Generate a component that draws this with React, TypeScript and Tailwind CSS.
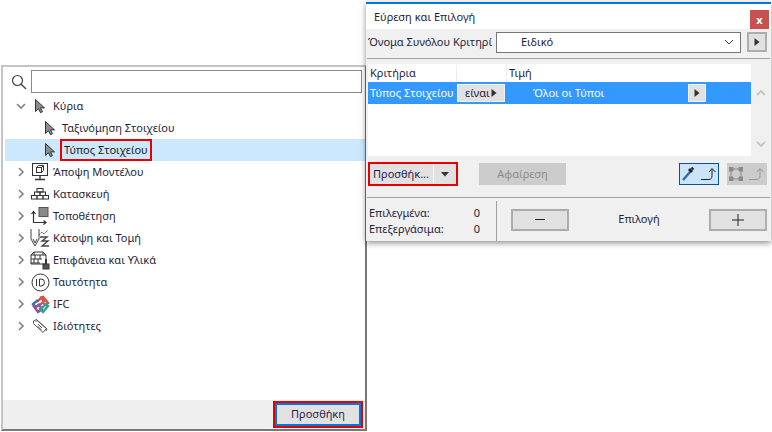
import type { ReactNode } from "react";

const font = "font-['Noto_Sans',sans-serif]";

function Chevron({ open }: { open?: boolean }) {
  return (
    <svg width="10" height="10" viewBox="0 0 10 10" className="shrink-0" fill="none" stroke="#808080" strokeWidth="1.6">
      {open ? <path d="M1 3l4 4 4-4" /> : <path d="M3 1l4 4-4 4" />}
    </svg>
  );
}

function Cursor() {
  return (
    <svg width="14" height="16" viewBox="0 0 14 16" className="shrink-0">
      <path d="M2.5 1.5v12l3-2.8 2 4 2-1-2-3.8h4z" fill="#8c8c8c" stroke="#333" strokeWidth="1" />
    </svg>
  );
}

function ViewIcon() {
  return (
    <svg width="18" height="18" viewBox="0 0 18 18" fill="none" stroke="#333" strokeWidth="1">
      <rect x="1.5" y="0.5" width="15" height="12" />
      <rect x="5.5" y="4.5" width="5" height="5" />
      <path d="M5.5 4.5l2-2h5v5l-2 2M10.5 4.5l2-2" />
      <path d="M9 13v3M4 16.5h10" strokeWidth="1.4" />
    </svg>
  );
}

function BricksIcon() {
  return (
    <svg width="18" height="14" viewBox="0 0 18 14" fill="none" stroke="#333" strokeWidth="1">
      <rect x="6" y="1.5" width="6" height="3.5" />
      <rect x="3.5" y="5" width="5.5" height="3.5" />
      <rect x="9" y="5" width="5.5" height="3.5" />
      <rect x="0.5" y="8.5" width="5.5" height="3.5" />
      <rect x="6" y="8.5" width="6" height="3.5" />
      <rect x="12" y="8.5" width="5.5" height="3.5" />
    </svg>
  );
}

function PlaceIcon() {
  return (
    <svg width="18" height="18" viewBox="0 0 18 18" fill="none">
      <rect x="8" y="0.5" width="9" height="9" fill="#8a8a8a" stroke="#555" />
      <path d="M2.5 5v10.5h12M0.5 7l2-2.5 2 2.5M12.5 13.5l2.5 2-2.5 2" stroke="#333" strokeWidth="1.2" />
    </svg>
  );
}

function SectionIcon() {
  return (
    <svg width="20" height="20" viewBox="0 0 20 20" fill="none" stroke="#444" strokeWidth="1">
      <path d="M1 1v10l4 7 4-7V1" />
      <path d="M3 11l2 4 2-4" />
      <path d="M9 7l3-3 2 2 4-4" strokeDasharray="2 1" />
      <path d="M10 9h7l-5 4h6l-6 5h7" strokeWidth="1.4" />
    </svg>
  );
}

function SurfaceIcon() {
  return (
    <svg width="20" height="20" viewBox="0 0 20 20" fill="none" stroke="#333" strokeWidth="1">
      <path d="M1 5l3-3h9l3 3v9H1zM1 5h15M1 9h11M1 13h9M5 5v4M10 5v4M4 9v4M8 9v4M4 2v3M13 2v3" />
      <rect x="13" y="14" width="6" height="5" fill="#555" />
      <path d="M16 14V9" strokeWidth="2" />
    </svg>
  );
}

function IdIcon() {
  return (
    <svg width="19" height="19" viewBox="0 0 19 19" fill="none" stroke="#333">
      <circle cx="9.5" cy="9.5" r="8.5" />
      <path d="M5.5 6v7M8.5 6v7h1.5a3.5 3.5 0 0 0 0-7z" />
    </svg>
  );
}

function IfcIcon() {
  return (
    <svg width="19" height="19" viewBox="0 0 19 19" fill="none" strokeWidth="2.4">
      <path d="M6 7l4-4 3 3-4 4" stroke="#d8504a" />
      <path d="M9 3l3-1 5 6-4 3" stroke="#d8504a" />
      <path d="M7 5L2 9l3 3 4-3" stroke="#3f6fb5" />
      <path d="M2 10l5 7 4-3-4-5" stroke="#a8479b" />
      <path d="M12 8l5 3-5 6-3-3 4-3" stroke="#2aa39a" />
    </svg>
  );
}

function TagIcon() {
  return (
    <svg width="17" height="17" viewBox="0 0 17 17" fill="none" stroke="#555">
      <path d="M1.5 3l3-1.5 10 9-3.5 4-9.5-9z" />
      <path d="M4 1.5l11 9.5-1 2M3.5 3.5h1M6 6l4 4M5.5 8l4 4" />
    </svg>
  );
}

function Tri({ down }: { down?: boolean }) {
  return (
    <svg width="8" height="8" viewBox="0 0 8 8" className="shrink-0">
      <path d={down ? "M0 2h8L4 6.5z" : "M1.5 0L6.5 4 1.5 8z"} fill="#333" />
    </svg>
  );
}

function TreeRow({ icon, label, open, indent, selected }: { icon: ReactNode; label: string; open?: boolean; indent?: boolean; selected?: boolean }) {
  return (
    <div className={`flex h-[22px] items-center ${selected ? "bg-[#cce8ff]" : ""}`}>
      <span className="flex w-[22px] shrink-0 justify-end pr-[1px]">{!indent && <Chevron open={open} />}</span>
      <span className={`flex w-[26px] shrink-0 justify-center ${indent ? "ml-[10px]" : ""}`}>{icon}</span>
      {selected ? (
        <span className="-ml-[3px] flex h-[22px] items-center border-[2px] border-[#e60000] px-[2px] text-[#1a1a1a]">{label}</span>
      ) : (
        <span className={indent ? "ml-[-1px]" : ""}>{label}</span>
      )}
    </div>
  );
}

const rows = [
  { label: "Άποψη Μοντέλου", icon: <ViewIcon /> },
  { label: "Κατασκευή", icon: <BricksIcon /> },
  { label: "Τοποθέτηση", icon: <PlaceIcon /> },
  { label: "Κάτοψη και Τομή", icon: <SectionIcon /> },
  { label: "Επιφάνεια και Υλικά", icon: <SurfaceIcon /> },
  { label: "Ταυτότητα", icon: <IdIcon /> },
  { label: "IFC", icon: <IfcIcon /> },
  { label: "Ιδιότητες", icon: <TagIcon /> },
];

function LeftWindow() {
  return (
    <div className="absolute left-[1px] top-[65px] flex h-[366px] w-[366px] flex-col border-[2px] border-[#c4c4c4] border-r-[#777] border-b-[#777] bg-white text-[#1e1e3c]">
      <div className="flex h-[26px] shrink-0 items-center pl-[8px] pr-[3px] pt-[3px]">
        <svg width="16" height="16" viewBox="0 0 16 16" fill="none" stroke="#444" strokeWidth="1.2" className="shrink-0">
          <circle cx="6.5" cy="6.5" r="5" />
          <path d="M10.2 10.2L15 15" strokeWidth="1.4" />
        </svg>
        <div className="ml-[4px] h-[23px] flex-1 border border-[#8a8a8a] bg-white" />
      </div>
      <div className="flex-1 pt-[2px] pl-[2px]">
        <TreeRow icon={<Cursor />} label="Κύρια" open />
        <TreeRow icon={<Cursor />} label="Ταξινόμηση Στοιχείου" indent />
        <TreeRow icon={<Cursor />} label="Τύπος Στοιχείου" indent selected />
        {rows.map((r) => (
          <TreeRow key={r.label} icon={r.icon} label={r.label} />
        ))}
      </div>
      <div className="flex h-[29px] shrink-0 items-center justify-end bg-[#efefef] pr-[2px]">
        <div className="border-[2px] border-[#e60000]">
          <button className="flex h-[23px] w-[86px] items-center justify-center border-[2px] border-[#0078d7] bg-[#e1e1e1] text-[#1e1e50]">Προσθήκη</button>
        </div>
      </div>
    </div>
  );
}

function GrayBtn({ children, className }: { children: ReactNode; className: string }) {
  return <button className={`flex items-center justify-center border-[2px] border-[#adadad] bg-[#e1e1e1] ${className}`}>{children}</button>;
}

function RightWindow() {
  return (
    <div className="absolute left-[366px] top-[2px] flex h-[239px] w-[405px] flex-col border-t-[2px] border-[#0078d7] bg-[#f0f0f0] text-[#1e1e3c] shadow-[0_2px_6px_rgba(0,0,0,0.45)]">
      <div className="flex h-[25px] shrink-0 items-start justify-between bg-white pl-[8px] pr-[2px]">
        <span className="mt-[5px]">Εύρεση και Επιλογή</span>
        <span className="mt-[6px] flex h-[19px] w-[19px] items-center justify-center bg-[#c75050] font-bold leading-none text-white">x</span>
      </div>
      <div className="flex h-[26px] shrink-0 items-center pl-[2px] pr-[4px]">
        <span className="w-[128px] shrink-0 whitespace-nowrap">Όνομα Συνόλου Κριτηρί</span>
        <div className="flex h-[21px] w-[245px] items-center justify-between border border-[#777] bg-white pl-[24px] pr-[6px]">
          <span>Ειδικό</span>
          <svg width="10" height="8" viewBox="0 0 10 8" fill="none" stroke="#444"><path d="M1 2l4 4 4-4" /></svg>
        </div>
        <GrayBtn className="ml-[6px] h-[20px] w-[20px]"><Tri /></GrayBtn>
      </div>
      <div className="mx-[1px] mt-[3px] h-[1px] shrink-0 bg-[#a0a0a0] pr-[3px]" />
      <div className="mt-[5px] flex h-[92px] shrink-0 pl-[2px] pr-[1px]">
        <div className="flex-1 bg-white">
          <div className="flex h-[18px] items-center">
            <span className="w-[89px] border-r border-[#ececec] pl-[2px]">Κριτήρια</span>
            <span className="h-[18px] w-[50px] border-r border-[#ececec]" />
            <span className="pl-[2px]">Τιμή</span>
          </div>
          <div className="flex h-[22px] items-center bg-[#3399ff] text-white">
            <span className="w-[89px] shrink-0 whitespace-nowrap pl-[2px]">Τύπος Στοιχείου</span>
            <div className="flex h-[18px] w-[48px] items-center justify-between border border-[#f0f0f0] bg-[#e1e1e1] px-[7px] text-[#1e1e3c]">
              <span>είναι</span>
              <Tri />
            </div>
            <span className="ml-[28px] w-[155px]">Όλοι οι Τύποι</span>
            <div className="flex h-[18px] w-[18px] items-center justify-center border border-[#f0f0f0] bg-[#e1e1e1]"><Tri /></div>
          </div>
        </div>
        <div className="flex w-[19px] shrink-0 flex-col items-center justify-between pb-[8px] pt-[25px]">
          <svg width="10" height="7" viewBox="0 0 10 7" fill="none" stroke="#c4c4c4" strokeWidth="1.8"><path d="M1 6l4-4 4 4" /></svg>
          <svg width="10" height="7" viewBox="0 0 10 7" fill="none" stroke="#c4c4c4" strokeWidth="1.8"><path d="M1 1l4 4 4-4" /></svg>
        </div>
      </div>
      <div className="mt-[6px] flex h-[24px] shrink-0 items-center pl-[2px] pr-[4px]">
        <div className="flex h-[24px] w-[90px] items-center border-[2px] border-[#e60000] bg-[#e1e1e1] pl-[3px] text-[#1e1e50]">
          <span className="w-[60px] whitespace-nowrap">Προσθήκ...</span>
          <span className="h-[18px] w-[1px] bg-[#f8f8f8]" />
          <span className="flex flex-1 justify-center"><Tri down /></span>
        </div>
        <div className="ml-[21px] flex h-[22px] w-[87px] items-center justify-center bg-[#cccccc] text-[#8c8c8c]">Αφαίρεση</div>
        <div className="ml-[113px] flex h-[22px] w-[40px] items-center justify-center gap-[6px] border-[1px] border-[#005499] bg-[#cce4f7]">
          <svg width="14" height="16" viewBox="0 0 14 16" fill="none">
            <path d="M2 14l7-8" stroke="#2b6cb0" strokeWidth="2.4" />
            <path d="M8 3l3 3" stroke="#222" strokeWidth="3" />
            <path d="M10.5 1.5l2 2" stroke="#222" strokeWidth="2" />
          </svg>
          <svg width="16" height="14" viewBox="0 0 16 14" fill="none" stroke="#222"><path d="M0 12.5h8c2 0 3-1.5 3-4V2M8 5l3-3.5L14.500 5" /></svg>
        </div>
        <div className="ml-[8px] flex h-[22px] w-[40px] items-center justify-center gap-[6px] bg-[#cccccc]">
          <svg width="14" height="14" viewBox="0 0 14 14" fill="none" stroke="#8a8a8a">
            <rect x="2" y="2" width="10" height="10" />
            <path d="M0 0h4v4H0zM10 0h4v4h-4zM0 10h4v4H0zM10 10h4v4h-4z" fill="#8a8a8a" />
          </svg>
          <svg width="16" height="14" viewBox="0 0 16 14" fill="none" stroke="#999"><path d="M0 12.500h8c2 0 3-1.500 3-4V2M8 5l3-3.500L14.500 5" /></svg>
        </div>
      </div>
      <div className="mx-[1px] mt-[11px] h-[1px] shrink-0 bg-[#a0a0a0]" />
      <div className="flex min-h-0 flex-1 items-stretch pl-[3px] pr-[4px]">
        <div className="w-[113px] shrink-0 pt-[7px] pr-[2px] leading-[16px]">
          <div className="flex justify-between"><span>Επιλεγμένα:</span><span>0</span></div>
          <div className="flex justify-between"><span>Επεξεργάσιμα:</span><span>0</span></div>
        </div>
        <div className="ml-[14px] mt-[3px] w-[1px] bg-[#a0a0a0]" />
        <div className="flex flex-1 items-center justify-between pl-[14px]">
          <GrayBtn className="h-[22px] w-[58px]">
            <span className="h-[1px] w-[10px] bg-[#222]" />
          </GrayBtn>
          <span>Επιλογή</span>
          <GrayBtn className="h-[22px] w-[58px]">
            <svg width="12" height="12" viewBox="0 0 12 12" stroke="#222"><path d="M6 0v12M0 6h12" /></svg>
          </GrayBtn>
        </div>
      </div>
    </div>
  );
}

export default function App() {
  return (
    <div className={`relative h-[432px] w-[772px] overflow-hidden bg-white text-[11px] ${font}`}>
      <LeftWindow />
      <RightWindow />
    </div>
  );
}
